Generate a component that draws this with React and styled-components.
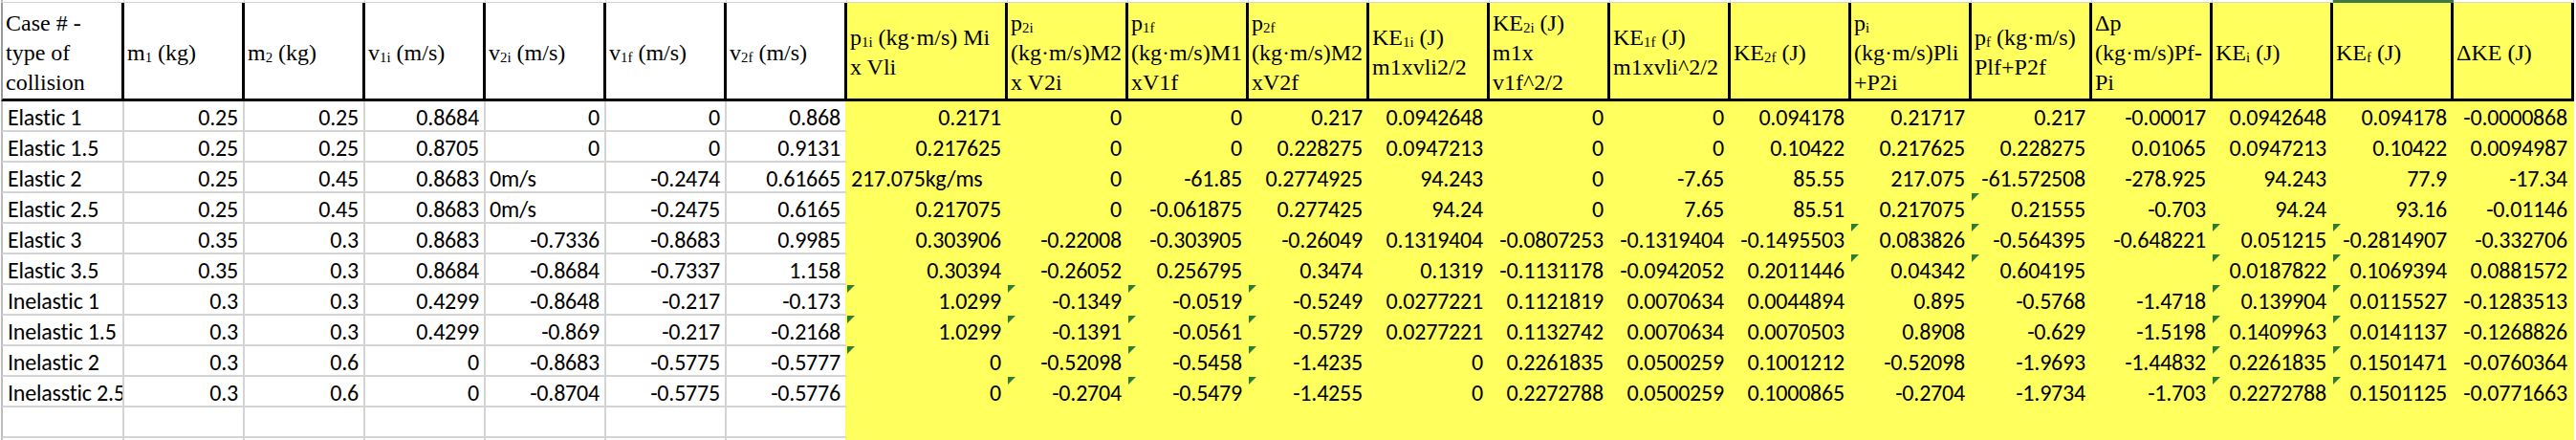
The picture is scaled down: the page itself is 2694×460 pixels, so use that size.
import React from 'react';
import styled, { createGlobalStyle, css } from 'styled-components';

const YELLOW = '#FFFF5E';
const GRID = '#D4D4D4';
const FLAG = '#2E7D2E';

const GlobalStyle = createGlobalStyle`
  html, body { margin: 0; padding: 0; background: #ffffff; overflow: hidden; }
  #root { width: 2694px; height: 460px; overflow: hidden; }
`;

const Sheet = styled.div`
  display: flex;
  flex-direction: column;
  margin-left: 1px;
`;

const Row = styled.div`
  display: grid;
  grid-template-columns: 129px repeat(6, 126px) 168px repeat(13, 126px);
`;

const StripCell = styled.div`
  box-sizing: border-box;
  height: 3px;
  border-right: 1px solid ${GRID};
  border-bottom: 1px solid ${GRID};
  background: #fff;
  ${(p) => p.$first && css`border-left: 2px solid #bcbcbc;`}
  ${(p) => p.$active && css`background: #3B7A46; border-bottom-color: #3B7A46; border-right-color: #3B7A46;`}
`;

const HeaderCell = styled.div`
  box-sizing: border-box;
  height: 103px;
  padding: 4px 2px 0 3px;
  display: flex;
  flex-direction: column;
  justify-content: center;
  border-right: 3px solid #000;
  border-bottom: 3px solid #000;
  ${(p) => p.$first && css`border-left: 2px solid #9a9a9a;`}
  background: ${(p) => (p.$fill ? YELLOW : '#fff')};
  font-family: 'Liberation Serif', 'Times New Roman', serif;
  font-size: 24px;
  line-height: 31px;
  color: #000;
  white-space: nowrap;
  overflow-x: clip;
`;

const HeadLine = styled.span`
  display: block;
`;

const Sub = styled.span`
  font-size: 0.62em;
  vertical-align: -0.14em;
  line-height: 0;
`;

const DataCell = styled.div`
  position: relative;
  box-sizing: border-box;
  height: 32px;
  padding: 4px 5px 0 4px;
  border-right: 2px solid ${(p) => (p.$fill || p.$edge ? YELLOW : GRID)};
  border-bottom: 2px solid ${(p) => (p.$fill ? YELLOW : GRID)};
  ${(p) => p.$first && css`border-left: 2px solid #bcbcbc; padding-left: 5px;`}
  background: ${(p) => (p.$fill ? YELLOW : '#fff')};
  font-family: 'Carlito', 'Lato', 'Liberation Sans', sans-serif;
  font-size: 24px;
  line-height: 25px;
  letter-spacing: -0.2px;
  color: #000;
  text-align: ${(p) => (p.$text ? 'left' : 'right')};
  white-space: nowrap;
  overflow-x: clip;
`;

const Flag = styled.span`
  position: absolute;
  left: 0;
  top: 0;
  width: 0;
  height: 0;
  border-top: 8px solid ${FLAG};
  border-right: 8px solid transparent;
`;

const headers = [
  ['Case # -', 'type of', 'collision'],
  [<>m<Sub>1</Sub> (kg)</>],
  [<>m<Sub>2</Sub> (kg)</>],
  [<>v<Sub>1i</Sub> (m/s)</>],
  [<>v<Sub>2i</Sub> (m/s)</>],
  [<>v<Sub>1f</Sub> (m/s)</>],
  [<>v<Sub>2f</Sub> (m/s)</>],
  [<>p<Sub>1i</Sub> (kg·m/s) Mi</>, 'x Vli'],
  [<>p<Sub>2i</Sub></>, '(kg·m/s)M2', 'x V2i'],
  [<>p<Sub>1f</Sub></>, '(kg·m/s)M1', 'xV1f'],
  [<>p<Sub>2f</Sub></>, '(kg·m/s)M2', 'xV2f'],
  [<>KE<Sub>1i</Sub> (J)</>, 'm1xvli2/2'],
  [<>KE<Sub>2i</Sub> (J)</>, 'm1x', 'v1f^2/2'],
  [<>KE<Sub>1f</Sub> (J)</>, 'm1xvli^2/2'],
  [<>KE<Sub>2f</Sub> (J)</>],
  [<>p<Sub>i</Sub></>, '(kg·m/s)Pli', '+P2i'],
  [<>p<Sub>f</Sub> (kg·m/s)</>, 'Plf+P2f'],
  ['Δp', '(kg·m/s)Pf-', 'Pi'],
  [<>KE<Sub>i</Sub> (J)</>],
  [<>KE<Sub>f</Sub> (J)</>],
  ['ΔKE (J)'],
];

const rows = [
  ['Elastic 1', '0.25', '0.25', '0.8684', '0', '0', '0.868', '0.2171', '0', '0', '0.217', '0.0942648', '0', '0', '0.094178', '0.21717', '0.217', '-0.00017', '0.0942648', '0.094178', '-0.0000868'],
  ['Elastic 1.5', '0.25', '0.25', '0.8705', '0', '0', '0.9131', '0.217625', '0', '0', '0.228275', '0.0947213', '0', '0', '0.10422', '0.217625', '0.228275', '0.01065', '0.0947213', '0.10422', '0.0094987'],
  ['Elastic 2', '0.25', '0.45', '0.8683', '0m/s', '-0.2474', '0.61665', '217.075kg/ms', '0', '-61.85', '0.2774925', '94.243', '0', '-7.65', '85.55', '217.075', '-61.572508', '-278.925', '94.243', '77.9', '-17.34'],
  ['Elastic 2.5', '0.25', '0.45', '0.8683', '0m/s', '-0.2475', '0.6165', '0.217075', '0', '-0.061875', '0.277425', '94.24', '0', '7.65', '85.51', '0.217075', '0.21555', '-0.703', '94.24', '93.16', '-0.01146'],
  ['Elastic 3', '0.35', '0.3', '0.8683', '-0.7336', '-0.8683', '0.9985', '0.303906', '-0.22008', '-0.303905', '-0.26049', '0.1319404', '-0.0807253', '-0.1319404', '-0.1495503', '0.083826', '-0.564395', '-0.648221', '0.051215', '-0.2814907', '-0.332706'],
  ['Elastic 3.5', '0.35', '0.3', '0.8684', '-0.8684', '-0.7337', '1.158', '0.30394', '-0.26052', '0.256795', '0.3474', '0.1319', '-0.1131178', '-0.0942052', '0.2011446', '0.04342', '0.604195', '', '0.0187822', '0.1069394', '0.0881572'],
  ['Inelastic 1', '0.3', '0.3', '0.4299', '-0.8648', '-0.217', '-0.173', '1.0299', '-0.1349', '-0.0519', '-0.5249', '0.0277221', '0.1121819', '0.0070634', '0.0044894', '0.895', '-0.5768', '-1.4718', '0.139904', '0.0115527', '-0.1283513'],
  ['Inelastic 1.5', '0.3', '0.3', '0.4299', '-0.869', '-0.217', '-0.2168', '1.0299', '-0.1391', '-0.0561', '-0.5729', '0.0277221', '0.1132742', '0.0070634', '0.0070503', '0.8908', '-0.629', '-1.5198', '0.1409963', '0.0141137', '-0.1268826'],
  ['Inelastic 2', '0.3', '0.6', '0', '-0.8683', '-0.5775', '-0.5777', '0', '-0.52098', '-0.5458', '-1.4235', '0', '0.2261835', '0.0500259', '0.1001212', '-0.52098', '-1.9693', '-1.44832', '0.2261835', '0.1501471', '-0.0760364'],
  ['Inelasstic 2.5', '0.3', '0.6', '0', '-0.8704', '-0.5775', '-0.5776', '0', '-0.2704', '-0.5479', '-1.4255', '0', '0.2272788', '0.0500259', '0.1000865', '-0.2704', '-1.9734', '-1.703', '0.2272788', '0.1501125', '-0.0771663'],
  Array(21).fill(''),
  Array(21).fill(''),
];

const flags = {
  3: [16],
  4: [15, 16, 18, 19],
  5: [15, 16, 18, 19],
  6: [7, 8, 9, 10, 18, 19],
  7: [7, 8, 9, 10, 18, 19],
  8: [7, 9, 10, 18, 19],
  9: [8, 9, 10, 18, 19],
};

const isNumber = (v) => /^-?\d*\.?\d+$/.test(v);
const FILL_FROM = 7;

export default function App() {
  return (
    <>
      <GlobalStyle />
      <Sheet>
        <Row>
          {headers.map((_, i) => (
            <StripCell key={i} $first={i === 0} $active={i === 19} />
          ))}
        </Row>
        <Row>
          {headers.map((lines, i) => (
            <HeaderCell key={i} $first={i === 0} $fill={i >= FILL_FROM}>
              {lines.map((l, j) => (
                <HeadLine key={j}>{l}</HeadLine>
              ))}
            </HeaderCell>
          ))}
        </Row>
        {rows.map((r, ri) => (
          <Row key={ri}>
            {r.map((v, ci) => (
              <DataCell
                key={ci}
                $first={ci === 0}
                $fill={ci >= FILL_FROM}
                $edge={ci === FILL_FROM - 1}
                $text={v !== '' && !isNumber(v)}
              >
                {flags[ri] && flags[ri].includes(ci) && <Flag />}
                {v}
              </DataCell>
            ))}
          </Row>
        ))}
      </Sheet>
    </>
  );
}
